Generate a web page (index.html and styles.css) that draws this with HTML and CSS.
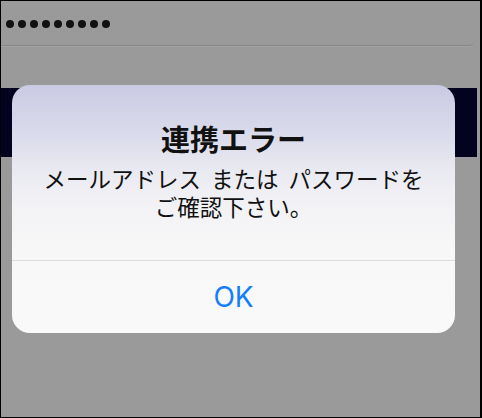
FILE: index.html
```html
<!DOCTYPE html>
<html lang="ja">
<head>
<meta charset="utf-8">
<link rel="stylesheet" href="styles.css">
</head>
<body>
<div class="screen">
  <div class="field">
    <div class="dots">
      <span class="dot"></span><span class="dot"></span><span class="dot"></span>
      <span class="dot"></span><span class="dot"></span><span class="dot"></span>
      <span class="dot"></span><span class="dot"></span><span class="dot"></span>
    </div>
  </div>
  <div class="band"></div>

  <div class="alert">
    <div class="alert-body">
      <div class="alert-title">連携エラー</div>
      <div class="alert-message"><span class="line1">メールアドレス または パスワードを</span><br>ご確認下さい。</div>
    </div>
    <div class="alert-actions">
      <div class="alert-button">OK</div>
    </div>
  </div>
</div>
</body>
</html>
```

FILE: styles.css
```css
html, body {
  margin: 0;
  padding: 0;
}
body {
  width: 482px;
  height: 418px;
  overflow: hidden;
  font-family: "Noto Sans CJK JP", "Noto Sans", sans-serif;
}
.screen {
  position: relative;
  box-sizing: border-box;
  width: 482px;
  height: 418px;
  background: #9a9a9a;
  border: 1px solid #000;
  border-right-width: 2px;
  display: flex;
  flex-direction: column;
}
.field {
  box-sizing: border-box;
  width: 475px;
  height: 45px;
  border-bottom: 1px solid #878787;
  border-bottom-right-radius: 8px;
  box-shadow: 0 1px 0 #a3a3a3;
  display: flex;
  align-items: center;
  padding-left: 5px;
}
.dots {
  display: flex;
  gap: 4px;
  margin-top: 1px;
}
.dot {
  width: 8px;
  height: 8px;
  border-radius: 50%;
  background: #111;
}
.band {
  margin-top: 42px;
  width: 476px;
  height: 69px;
  background: #03031f;
}
.alert {
  position: absolute;
  left: 11px;
  top: 84px;
  width: 443px;
  height: 248px;
  border-radius: 18px;
  overflow: hidden;
  background: linear-gradient(180deg, #cacbe3 0%, #d8d9ea 18%, #e9e9f1 34%, #f3f3f6 50%, #f8f8f8 70%, #f9f9f9 100%);
  display: flex;
  flex-direction: column;
}
.alert-body {
  padding-top: 36px;
  padding-bottom: 40px;
  border-bottom: 1px solid #dcdcde;
  text-align: center;
  color: #111;
}
.alert-title {
  font-size: 29px;
  font-weight: 700;
  line-height: 34px;
}
.alert-message {
  margin-top: 9px;
  font-size: 22.5px;
  line-height: 28px;
}
.line1 {
  word-spacing: 5px;
}
.alert-button {
  height: 71px;
  display: flex;
  align-items: center;
  justify-content: center;
  font-family: "Inter", "Liberation Sans", sans-serif;
  font-size: 28px;
  color: #157efb;
}
```
